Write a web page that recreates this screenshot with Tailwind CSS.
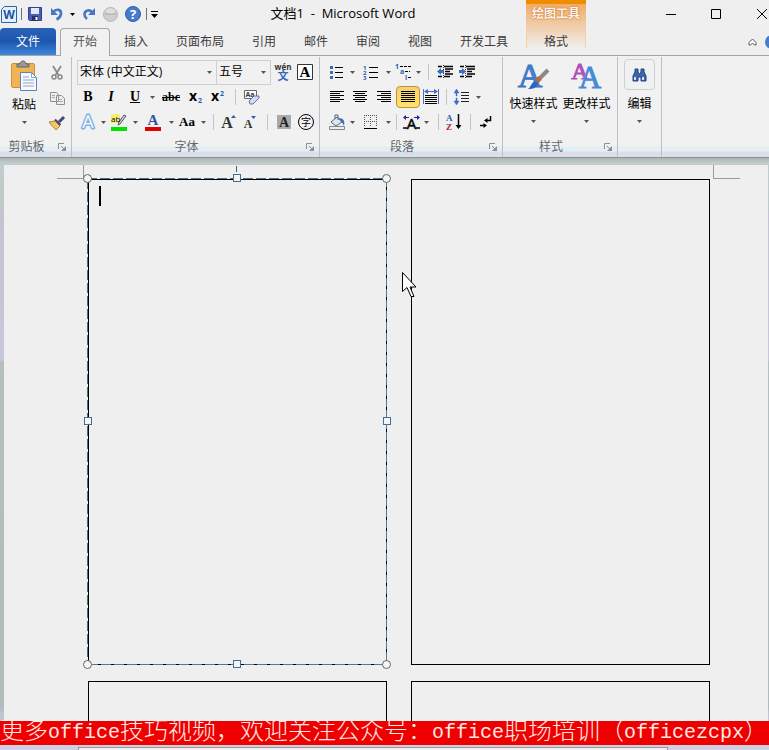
<!DOCTYPE html>
<html lang="zh-CN">
<head>
    <meta charset="UTF-8">
    <meta name="viewport" content="width=device-width, initial-scale=1.0">
    <title>文档1 - Microsoft Word</title>
    <script src="https://cdn.jsdelivr.net/npm/@tailwindcss/browser@4"></script>
    <style>
        body {
            font-family: 'Open Sans', 'Noto Sans CJK SC', sans-serif;
        }
        button {
            display: flex;
            align-items: center;
            justify-content: center;
            flex-shrink: 0;
        }
        svg {
            flex-shrink: 0;
            overflow: visible;
        }
        .serif {
            font-family: 'Liberation Serif', serif;
            font-weight: bold;
        }
    </style>
</head>
<body class="h-screen flex flex-col overflow-hidden bg-[#efefef] text-xs text-[#3a3a3a]">
    <!-- Shared glyphs -->
    <svg class="hidden">
        <symbol id="caret" viewBox="0 0 5 3"><path d="M0 0h5L2.500 3z" fill="#555"/></symbol>
        <symbol id="launcher" viewBox="0 0 8 8"><path d="M.5 6V.5H6M3 3l3 3" fill="none" stroke="#8a8f96"/><path d="M8 3v5H3z" fill="#8a8f96"/></symbol>
    </svg>

    <!-- Title bar -->
    <header class="flex h-7 shrink-0 items-center">
        <div class="flex w-40 shrink-0 items-center">
            <button aria-label="Word" class="w-[18px]">
                <svg width="16" height="17" viewBox="0 0 16 17"><path d="M3.500.5h12v16H.5v-13z" fill="#e4f0fb" stroke="#2a64a8"/><text x="8" y="13" font-size="12" font-weight="bold" text-anchor="middle" fill="#1c55a0">W</text></svg>
            </button>
            <span class="flex w-2 justify-center"><i class="h-3 w-px bg-gray-500"></i></span>
            <button aria-label="保存" class="w-5">
                <svg width="14" height="14" viewBox="0 0 14 14"><path d="M.5.5h13v13h-12l-1-1z" fill="#4a5cb4" stroke="#34418c"/><path d="M3 1h8v6H3z" fill="#dfeafa"/><path d="M4 9h6v5H4z" fill="#26306e"/><path d="M7.500 10h2v3h-2z" fill="#fff"/></svg>
            </button>
            <button aria-label="撤消" class="w-6">
                <svg width="14" height="14" viewBox="0 0 14 14"><path d="M3 5.500C6 1.500 11.500 2 11 7c-.3 2.600-2 4.300-4.500 5.500" fill="none" stroke="#4677c4" stroke-width="2.600"/><path d="M1 1v7h7z" fill="#4677c4"/></svg>
            </button>
            <button aria-label="撤消列表" class="w-2"><svg width="5" height="3" viewBox="0 0 5 3"><path d="M0 0h5L2.500 3z"/></svg></button>
            <button aria-label="恢复" class="w-6">
                <svg width="14" height="14" viewBox="0 0 14 14"><path d="M10.500 5.500C8 2 2.500 3 2.500 7.500c0 2 1 3.300 2.500 4.500" fill="none" stroke="#4677c4" stroke-width="2.600"/><path d="M13 1v7H6z" fill="#4677c4"/></svg>
            </button>
            <button aria-label="录制" class="w-5">
                <svg width="15" height="15" viewBox="0 0 15 15"><circle cx="7.500" cy="7.500" r="7" fill="#cecece" stroke="#b8b8b8"/><path d="M2 7h11" stroke="#aaa"/><ellipse cx="7.500" cy="4" rx="4.500" ry="2.500" fill="#dedede"/></svg>
            </button>
            <button aria-label="帮助" class="w-6">
                <svg width="16" height="16" viewBox="0 0 16 16"><circle cx="8" cy="8" r="7.500" fill="#4779cc" stroke="#2f5cac"/><text x="8" y="13" font-size="13" font-weight="bold" text-anchor="middle" fill="#fff">?</text></svg>
            </button>
            <span class="flex w-1 justify-center"><i class="h-3 w-px bg-gray-500"></i></span>
            <button aria-label="自定义快速访问工具栏" class="w-3"><svg width="7" height="7" viewBox="0 0 7 7"><path d="M0 0h7v1H0zM0 3h7L3.500 7z"/></svg></button>
        </div>
        <h1 class="flex-1 whitespace-pre text-center text-[13px] text-black">文档1  -  Microsoft Word</h1>
        <div class="flex w-[243px] shrink-0 justify-end">
            <button aria-label="最小化" class="h-7 w-[45px]"><svg width="10" height="10"><path d="M0 5.500h10" stroke="#000"/></svg></button>
            <button aria-label="最大化" class="h-7 w-[45px]"><svg width="10" height="10"><path d="M.5.5h9v9h-9z" fill="none" stroke="#000"/></svg></button>
            <button aria-label="关闭" class="h-7 w-[31px] pl-4"><svg width="10" height="10"><path d="M0 0l10 10M10 0L0 10" stroke="#000"/></svg></button>
        </div>
    </header>

    <!-- Ribbon tabs, the contextual tab rises into the title bar -->
    <nav class="pointer-events-none -mt-7 flex h-14 shrink-0 items-end border-b border-[#a6a6a6]">
        <button class="h-[27px] w-14 rounded-t-sm bg-linear-to-b from-[#2a62b6] via-[#1c57ae] to-[#3f86dc] text-white">文件</button>
        <button class="-mb-px ml-1 h-[28px] w-[50px] rounded-t-sm border border-b-0 border-[#a6a6a6] bg-[#f1f1f1] pb-px text-[#555]">开始</button>
        <button class="h-[27px] px-3.5">插入</button>
        <button class="h-[27px] px-3.5">页面布局</button>
        <button class="h-[27px] px-3.5">引用</button>
        <button class="h-[27px] px-3.5">邮件</button>
        <button class="h-[27px] px-3.5">审阅</button>
        <button class="h-[27px] px-3.5">视图</button>
        <button class="h-[27px] px-3.5">开发工具</button>
        <div class="ml-1 flex h-full w-[60px] shrink-0 flex-col">
            <div class="flex h-7 items-center justify-center border-t-4 border-[#f08c00] bg-linear-to-b from-[#f2ac62] to-[#f0d0b0] pb-1 font-bold text-[#fff4e8] [text-shadow:0_0_2px_#b05a20]">绘图工具</div>
            <button class="h-5 border-x border-[#f3cfa4] bg-linear-to-b from-[#f0cfae] to-[#efefef] pt-[7px]">格式</button>
        </div>
        <div class="flex h-[27px] flex-1 items-center justify-end gap-2">
            <button aria-label="功能区最小化"><svg width="9" height="8" viewBox="0 0 9 8"><path d="M4.500 1L8 4.500V7H6.500l-2-2-2 2H1V4.500z" fill="#fff" stroke="#555"/></svg></button>
            <button aria-label="Word 帮助" class="overflow-hidden"><svg width="4" height="14" viewBox="0 0 4 14"><circle cx="7" cy="7" r="7" fill="#4779cc"/></svg></button>
        </div>
    </nav>

    <!-- Ribbon -->
    <div class="flex h-[102px] shrink-0 border-b border-[#8b9293] bg-[linear-gradient(#f1f1f1_90px,#e2eff2_91px,#e4eff2_95px,#dcdfea_96px)] pt-px text-black">
        <!-- 剪贴板 -->
        <section class="flex w-[72px] shrink-0 flex-col border-r border-[#bcbfc4]">
            <div class="flex flex-1 gap-px pt-1">
                <button class="w-12 flex-col self-start">
                    <svg width="26" height="30" viewBox="0 0 26 30"><rect x=".5" y="2.500" width="23" height="24" rx="1.500" fill="#efb554" stroke="#d0913a"/><path d="M6 6V3h3c0-4 6-4 6 0h3v3z" fill="#999" stroke="#666"/><path d="M9.500 11.500h11l5 5v13h-16z" fill="#f6faff" stroke="#6480b0"/><path d="M20.500 11.500v5h5M12 16h6m-6 3h11m-11 3h11m-11 3h11" fill="none" stroke="#8ca6d0"/></svg>
                    <span class="mt-1.5">粘贴</span>
                    <svg class="mt-2" width="5" height="3"><use href="#caret"/></svg>
                </button>
                <div class="flex flex-col gap-px">
                    <button aria-label="剪切" class="h-6 w-4"><svg width="12" height="14" viewBox="0 0 12 14"><path d="M2 0l5.500 9M10 0L4.500 9" stroke="#888" stroke-width="1.700"/><circle cx="3" cy="11" r="2" fill="none" stroke="#888" stroke-width="1.500"/><circle cx="9" cy="11" r="2" fill="none" stroke="#888" stroke-width="1.500"/></svg></button>
                    <button aria-label="复制" class="h-6 w-4"><svg width="15" height="13" viewBox="0 0 15 13"><path d="M.5.5h6l2 2v7h-8zM6.500 3.500h5l3 3v6h-8z" fill="#eee" stroke="#8f8f8f"/><path d="M2 3.500h3M2 5.500h3M8 7.500h4M8 9.500h5" stroke="#aaa"/></svg></button>
                    <button aria-label="格式刷" class="h-6 w-4"><svg width="16" height="14" viewBox="0 0 16 14"><path d="M15 1l-5 5" stroke="#444a78" stroke-width="3"/><path d="M0 6l6-1 5 5-4 4c-2-2-5-5-7-8z" fill="#f0c764" stroke="#b08430"/><path d="M6 3.500l5.500 5.500" stroke="#49486a" stroke-width="2"/></svg></button>
                </div>
            </div>
            <footer class="flex h-5 shrink-0 items-center text-[#5f6670]"><span class="flex-1 text-center">剪贴板</span><button aria-label="剪贴板选项" class="w-[18px]"><svg width="8" height="8"><use href="#launcher"/></svg></button></footer>
        </section>

        <!-- 字体 -->
        <section class="flex w-[248px] shrink-0 flex-col border-r border-[#bcbfc4]">
            <div class="flex flex-1 flex-col gap-px pl-[5px] pt-[3px]">
                <div class="flex h-6 items-center">
                    <label class="relative flex h-[25px] w-[140px] items-center border border-[#cfcfcf]"><input aria-label="字体" value="宋体 (中文正文)" class="w-full px-0.5 outline-none"><svg class="absolute right-1" width="5" height="3"><use href="#caret"/></svg></label>
                    <label class="relative flex h-[25px] w-[54px] items-center border border-l-0 border-[#cfcfcf]"><input aria-label="字号" value="五号" class="w-full px-0.5 outline-none"><svg class="absolute right-1" width="5" height="3"><use href="#caret"/></svg></label>
                    <button aria-label="拼音指南" class="w-6 flex-col"><span class="text-[8px] leading-[8px] font-bold text-[#333]">wén</span><span class="text-[11px] leading-[10px] font-bold text-[#3a66c0]">文</span></button>
                    <button aria-label="字符边框" class="w-5"><svg width="16" height="16" viewBox="0 0 16 16"><path d="M.5.5h15v15H.5z" fill="#fff" stroke="#334"/><text x="8" y="13" font-size="15" text-anchor="middle" class="serif">A</text></svg></button>
                </div>
                <div class="flex h-6 items-center">
                    <button aria-label="加粗" class="serif w-[22px] text-sm">B</button>
                    <button aria-label="倾斜" class="serif w-6 text-sm italic">I</button>
                    <button aria-label="下划线" class="serif w-6 text-sm underline">U</button>
                    <button aria-label="下划线样式" class="w-2.5"><svg width="5" height="3"><use href="#caret"/></svg></button>
                    <button aria-label="删除线" class="serif w-7 text-xs line-through">abc</button>
                    <button aria-label="下标" class="w-[22px]"><svg width="14" height="14" viewBox="0 0 14 14"><text x="0" y="11" font-size="14" font-weight="bold">x</text><text x="9" y="13" font-size="7" font-weight="bold" fill="#2b5cb8">2</text></svg></button>
                    <button aria-label="上标" class="w-[22px]"><svg width="14" height="14" viewBox="0 0 14 14"><text x="0" y="11" font-size="14" font-weight="bold">x</text><text x="9" y="6" font-size="7" font-weight="bold" fill="#2b5cb8">2</text></svg></button>
                    <span class="flex w-3 justify-center"><i class="h-4 w-px bg-[#c4c4c4]"></i></span>
                    <button aria-label="清除格式" class="w-[22px]"><svg width="16" height="16" viewBox="0 0 16 16"><path d="M.5 1.500h12v8H.5z" fill="#fff" stroke="#667"/><text x="1.500" y="8" font-size="7" font-weight="bold" fill="#333">Aa</text><path d="M5 12l5-5 5 0 0 2-6 6H6z" fill="#d4dcf4" stroke="#6074b0"/></svg></button>
                </div>
                <div class="flex h-6 items-center">
                    <button aria-label="文本效果" class="w-[22px]"><svg width="16" height="16" viewBox="0 0 16 16"><text x="8" y="14" font-size="18" text-anchor="middle" fill="#f4faff" stroke="#7fb2e2" stroke-width="3" stroke-linejoin="round" paint-order="stroke">A</text></svg></button>
                    <button aria-label="文本效果列表" class="w-2"><svg width="5" height="3"><use href="#caret"/></svg></button>
                    <button aria-label="突出显示" class="w-6"><svg width="16" height="17" viewBox="0 0 16 17"><path d="M0 0h9v9H0z" fill="#f6ee70"/><path d="M15 2l-6 8-2 1 1-3 5-7z" fill="#c9d4ee" stroke="#556"/><text x="0" y="8" font-size="8" fill="#000">ab</text><path d="M0 13h16v4H0z" fill="#00e400"/></svg></button>
                    <button aria-label="突出显示颜色" class="w-2"><svg width="5" height="3"><use href="#caret"/></svg></button>
                    <button aria-label="字体颜色" class="w-7"><svg width="16" height="17" viewBox="0 0 16 17"><text x="8" y="11" font-size="15" text-anchor="middle" fill="#2f559c" class="serif">A</text><path d="M0 13h16v4H0z" fill="#e00000"/></svg></button>
                    <button aria-label="字体颜色列表" class="w-2"><svg width="5" height="3"><use href="#caret"/></svg></button>
                    <button aria-label="更改大小写" class="serif w-6 text-[13px]">Aa</button>
                    <button aria-label="大小写列表" class="w-2"><svg width="5" height="3"><use href="#caret"/></svg></button>
                    <span class="flex w-3 justify-center"><i class="h-4 w-px bg-[#c4c4c4]"></i></span>
                    <button aria-label="增大字体" class="w-5"><svg width="16" height="16" viewBox="0 0 16 16"><text x="6" y="14" font-size="16" text-anchor="middle" fill="#333" class="serif">A</text><path d="M10 4l2.500-3L15 4z" fill="#2b5cb8"/></svg></button>
                    <button aria-label="缩小字体" class="w-[22px]"><svg width="14" height="16" viewBox="0 0 14 16"><text x="5" y="14" font-size="12" text-anchor="middle" fill="#333" class="serif">A</text><path d="M8 2h5l-2.500 3z" fill="#2b5cb8"/></svg></button>
                    <span class="flex w-3 justify-center"><i class="h-4 w-px bg-[#c4c4c4]"></i></span>
                    <button aria-label="字符底纹" class="w-[22px]"><svg width="14" height="14" viewBox="0 0 14 14"><path d="M0 0h14v14H0z" fill="#a9a9a9"/><text x="7" y="12" font-size="14" text-anchor="middle" fill="#222" class="serif">A</text></svg></button>
                    <button aria-label="带圈字符" class="w-[22px]"><svg width="16" height="16" viewBox="0 0 16 16"><circle cx="8" cy="8" r="7.500" fill="none" stroke="#000"/><text x="8" y="12" font-size="10" text-anchor="middle">字</text></svg></button>
                </div>
            </div>
            <footer class="flex h-5 shrink-0 items-center text-[#5f6670]"><span class="flex-1 text-center">字体</span><button aria-label="字体选项" class="w-[18px]"><svg width="8" height="8"><use href="#launcher"/></svg></button></footer>
        </section>

        <!-- 段落 -->
        <section class="flex w-[183px] shrink-0 flex-col border-r border-[#bcbfc4]">
            <div class="flex flex-1 flex-col gap-px pl-1.5 pt-[3px]">
                <div class="flex h-6 items-center">
                    <button aria-label="项目符号" class="w-[22px]"><svg width="14" height="14" viewBox="0 0 14 14"><path d="M5 2.500h8M5 7.500h8M5 12.500h8" stroke="#000"/><path d="M0 1h3v3H0zM0 6h3v3H0zM0 11h3v3H0z" fill="#4068bc"/></svg></button>
                    <button aria-label="项目符号库" class="w-2"><svg width="5" height="3"><use href="#caret"/></svg></button>
                    <button aria-label="编号" class="w-7"><svg width="15" height="15" viewBox="0 0 15 15"><path d="M6 2.500h9M6 7.500h9M6 12.500h9" stroke="#000"/><g font-size="6" font-weight="bold" fill="#3058b4"><text x="0" y="5">1</text><text x="0" y="10">2</text><text x="0" y="15">3</text></g></svg></button>
                    <button aria-label="编号库" class="w-2"><svg width="5" height="3"><use href="#caret"/></svg></button>
                    <button aria-label="多级列表" class="w-[22px]"><svg width="17" height="16" viewBox="0 0 17 16"><path d="M5 2.500h12M10 7.500h5M13 13.500h4" stroke="#000" stroke-dasharray="3 1"/><g font-size="7" font-weight="bold" fill="#3058b4"><text x="0" y="5">1</text><text x="5" y="10">a</text><text x="10" y="16">i</text></g></svg></button>
                    <button aria-label="多级列表库" class="w-2"><svg width="5" height="3"><use href="#caret"/></svg></button>
                    <span class="flex w-3 justify-center"><i class="h-4 w-px bg-[#c4c4c4]"></i></span>
                    <button aria-label="减少缩进量" class="w-[22px]"><svg width="16" height="14" viewBox="0 0 16 14"><path d="M1 1.500h4M7 1.500h9M8 4h8M8 6.500h5M8 9h8M1 11.500h4M7 11.500h6" stroke="#000" stroke-width="1.500"/><path d="M6.500 0v14" stroke="#333" stroke-dasharray="1 1"/><path d="M0 6.500L4 3v2h3v3H4v2z" fill="#3a6cc8"/></svg></button>
                    <button aria-label="增加缩进量" class="w-[22px]"><svg width="16" height="14" viewBox="0 0 16 14"><path d="M1 1.500h4M7 1.500h9M8 4h8M8 6.500h5M8 9h8M1 11.500h4M7 11.500h6" stroke="#000" stroke-width="1.500"/><path d="M6.500 0v14" stroke="#333" stroke-dasharray="1 1"/><path d="M7 6.500L3 3v2H0v3h3v2z" fill="#3a6cc8"/></svg></button>
                </div>
                <div class="flex h-6 items-center">
                    <button aria-label="左对齐" class="w-[22px]"><svg width="14" height="12"><path d="M0 .5h14M0 2.500h10M0 4.500h14M0 6.500h10M0 8.500h14M0 10.500h10" stroke="#000"/></svg></button>
                    <button aria-label="居中" class="w-6"><svg width="14" height="12"><path d="M0 .5h14M2 2.500h10M0 4.500h14M2 6.500h10M0 8.500h14M2 10.500h10" stroke="#000"/></svg></button>
                    <button aria-label="右对齐" class="w-6"><svg width="14" height="12"><path d="M0 .5h14M4 2.500h10M0 4.500h14M4 6.500h10M0 8.500h14M4 10.500h10" stroke="#000"/></svg></button>
                    <button aria-label="两端对齐" class="h-[22px] w-6 rounded-sm border border-[#c09038] bg-linear-to-b from-[#f8d070] to-[#fde46c]"><svg width="14" height="12"><path d="M0 .5h14M0 2.500h14M0 4.500h14M0 6.500h14M0 8.500h14M0 10.500h14" stroke="#000"/></svg></button>
                    <button aria-label="分散对齐" class="w-[22px]"><svg width="16" height="16" viewBox="0 0 16 16"><path d="M.5 0v15M15.500 0v15" stroke="#4a70b8"/><path d="M2 6.500h12M2 8.500h12M2 10.500h12M2 12.500h12M2 14.500h12" stroke="#000"/><path d="M4 2.500h8" stroke="#3a6cc8"/><path d="M1 2.500L5 0v5zM15 2.500L11 0v5z" fill="#3a6cc8"/></svg></button>
                    <span class="flex w-2 justify-center"><i class="h-4 w-px bg-[#c4c4c4]"></i></span>
                    <button aria-label="行距" class="w-6"><svg width="16" height="16" viewBox="0 0 16 16"><path d="M7 3.500h8M7 6.500h8M7 9.500h8M7 12.500h8" stroke="#222"/><path d="M2.500 0L5 4H3v3H2V4H0zM2.500 16L5 12H3V9H2v3H0z" fill="#3a6cc8" stroke="#3a6cc8" stroke-width=".5"/></svg></button>
                    <button aria-label="行距选项" class="w-2"><svg width="5" height="3"><use href="#caret"/></svg></button>
                </div>
                <div class="flex h-6 items-center">
                    <button aria-label="底纹" class="w-[22px]"><svg width="16" height="16" viewBox="0 0 16 16"><path d="M2 8l6-5 5 5-6 4z" fill="#dce6f6" stroke="#567"/><path d="M6 5V1h3v5" fill="none" stroke="#567"/><path d="M10 4c5 0 6 4 5 8-1-2-1-3-3-4z" fill="#3a6cc8"/><path d="M.5 12.500h15v3H.5z" fill="#eee" stroke="#888"/></svg></button>
                    <button aria-label="底纹颜色" class="w-2"><svg width="5" height="3"><use href="#caret"/></svg></button>
                    <button aria-label="边框" class="w-7"><svg width="13" height="14" viewBox="0 0 13 14"><path d="M0 .5h13M0 6.500h13M.5 0v12M6.500 0v12M12.500 0v12" stroke="#555" stroke-dasharray="1 1"/><path d="M0 13.500h13" stroke="#000" stroke-width="1"/></svg></button>
                    <button aria-label="边框类型" class="w-2"><svg width="5" height="3"><use href="#caret"/></svg></button>
                    <span class="flex w-2 justify-center"><i class="h-4 w-px bg-[#c4c4c4]"></i></span>
                    <button aria-label="中文版式" class="w-[22px]"><svg width="17" height="14" viewBox="0 0 17 14"><text x="8.500" y="14" font-size="15" text-anchor="middle" stroke="#000" stroke-width=".5">A</text><path d="M0 13h4M13 13h4" stroke="#000" stroke-width="1.700"/><path d="M0 2.500L3 0v2h3v1H3v2zM17 2.500L14 0v2h-3v1h3v2z" fill="#1a28a0"/></svg></button>
                    <button aria-label="中文版式列表" class="w-2"><svg width="5" height="3"><use href="#caret"/></svg></button>
                    <span class="flex w-4 justify-center"><i class="h-4 w-px bg-[#c4c4c4]"></i></span>
                    <button aria-label="排序" class="w-4"><svg width="16" height="16" viewBox="0 0 16 16"><text x="0" y="7" font-size="9" fill="#2b5cb8" class="serif">A</text><text x="0" y="16" font-size="9" fill="#b02030" class="serif">Z</text><path d="M12.500 0v13" stroke="#000" stroke-width="1.500"/><path d="M9.500 11h6L12.500 15z"/></svg></button>
                    <span class="flex w-4 justify-center"><i class="h-4 w-px bg-[#c4c4c4]"></i></span>
                    <button aria-label="显示编辑标记" class="w-4"><svg width="12" height="13" viewBox="0 0 12 13"><path d="M10.500 0v4.500H6M0 9.500h5" fill="none" stroke="#000" stroke-width="1.500"/><path d="M4 4.500L7.500 2v5zM7 9.500L3.500 7v5z"/></svg></button>
                </div>
            </div>
            <footer class="flex h-5 shrink-0 items-center text-[#5f6670]"><span class="flex-1 text-center">段落</span><button aria-label="段落选项" class="w-[18px]"><svg width="8" height="8"><use href="#launcher"/></svg></button></footer>
        </section>

        <!-- 样式 -->
        <section class="flex w-[115px] shrink-0 flex-col border-r border-[#bcbfc4]">
            <div class="flex flex-1 justify-center gap-[5px] pt-1">
                <button class="w-12 flex-col self-start whitespace-nowrap">
                    <svg width="30" height="29" viewBox="0 0 30 29"><text x="11" y="26" font-size="34" text-anchor="middle" fill="#4584d4" stroke="#3a74c4" font-family="Liberation Serif">A</text><path d="M29 9l-9 9" stroke="#8a8a8a" stroke-width="4"/><path d="M21 17l-3 3" stroke="#d06030" stroke-width="5"/><path d="M19 22c-1 5-5 6-10 6 3-2 3-6 7-8z" fill="#2c68b8"/></svg>
                    <span class="mt-1.5">快速样式</span>
                    <svg class="mt-2" width="5" height="3"><use href="#caret"/></svg>
                </button>
                <button class="w-12 flex-col self-start whitespace-nowrap">
                    <svg width="30" height="29" viewBox="0 0 30 29"><text x="8" y="18" font-size="24" text-anchor="middle" fill="#b050b8" stroke="#b050b8" font-family="Liberation Serif">A</text><text x="18" y="27" font-size="31" text-anchor="middle" fill="#4c88d8" stroke="#4c88d8" font-family="Liberation Serif">A</text></svg>
                    <span class="mt-1.5">更改样式</span>
                    <svg class="mt-2" width="5" height="3"><use href="#caret"/></svg>
                </button>
            </div>
            <footer class="flex h-5 shrink-0 items-center text-[#5f6670]"><span class="flex-1 text-center">样式</span><button aria-label="样式选项" class="w-[18px]"><svg width="8" height="8"><use href="#launcher"/></svg></button></footer>
        </section>

        <!-- 编辑 -->
        <section class="flex w-11 shrink-0 justify-center border-r border-[#bcbfc4]">
            <button class="flex-col self-start pt-0.5">
                <span class="flex h-[31px] w-[31px] items-center justify-center rounded-sm border border-[#cdd0d4]">
                    <svg width="15" height="14" viewBox="0 0 15 14"><path d="M3 1h3v3l1 2h1l1-2V1h3v3l2 4v5H9V9H6v4H1V8l2-4z" fill="#3e68b4" stroke="#24407c"/><path d="M3 9v3M11 9v3" stroke="#cfe0ff" stroke-width="2"/></svg>
                </span>
                <span class="mt-1.5">编辑</span>
                <svg class="mt-2" width="5" height="3"><use href="#caret"/></svg>
            </button>
        </section>
    </div>

    <!-- Document area -->
    <main class="flex min-h-0 flex-1 bg-[linear-gradient(#a9b4b4,#c2cccc_5px,#bccaca_52px,#c4c3d4_54px,#c8c6d8_202px,#b4c0c0_204px,#b0bcbc_550px,#c4c3d4_556px)] pl-1 pr-px pt-[7px]">
        <div class="relative flex-1 overflow-hidden bg-[#efefef]">
            <!-- Margin corner marks -->
            <div class="absolute left-[53px] top-0 h-3.5 w-[27px] border-b border-r border-[#9a9a9a]"></div>
            <div class="absolute right-7 top-0 h-3.5 w-[27px] border-b border-l border-[#9a9a9a]"></div>

            <div class="grid grid-cols-2 grid-rows-[486px_486px] gap-x-6 gap-y-4 pl-[84px] pr-[58px] pt-3.5">
                <!-- Selected text box -->
                <div class="relative border border-black">
                    <div class="absolute -left-0.5 -right-px -top-0.5 h-px bg-[repeating-linear-gradient(90deg,#4a7088_0_10px,#efefef_10px_13px)]"></div>
                    <div class="absolute -bottom-px -left-0.5 -top-px w-px bg-[repeating-linear-gradient(#4a7088_0_10px,#efefef_10px_13px)]"></div>
                    <div class="absolute -bottom-px -right-px -top-px w-px bg-[repeating-linear-gradient(#4a7c9c_0_8px,#000_8px_11px)]"></div>
                    <div class="absolute -bottom-px -left-px -right-px h-px bg-[repeating-linear-gradient(90deg,#4a7c9c_0_10px,#000_10px_13px)]"></div>
                    <div class="absolute -top-3.5 left-1/2 -ml-0.5 h-1.5 w-px bg-[#4a6070]"></div>
                    <i class="absolute -left-1.5 -top-1.5 size-[9px] rounded-full border border-[#666] bg-[#f4f4f4]"></i>
                    <i class="absolute -right-[5px] -top-1.5 size-[9px] rounded-full border border-[#666] bg-[#f4f4f4]"></i>
                    <i class="absolute -bottom-[5px] -left-1.5 size-[9px] rounded-full border border-[#666] bg-[#f4f4f4]"></i>
                    <i class="absolute -bottom-[5px] -right-[5px] size-[9px] rounded-full border border-[#666] bg-[#f4f4f4]"></i>
                    <i class="absolute -top-1.5 left-1/2 -ml-[5px] size-2 border border-[#426f98] bg-[#f4f4f4]"></i>
                    <i class="absolute -bottom-1 left-1/2 -ml-[5px] size-2 border border-[#426f98] bg-[#f4f4f4]"></i>
                    <i class="absolute -left-[5px] top-1/2 -mt-[5px] size-2 border border-[#426f98] bg-[#f4f4f4]"></i>
                    <i class="absolute -right-[5px] top-1/2 -mt-[5px] size-2 border border-[#426f98] bg-[#f4f4f4]"></i>
                    <div class="ml-2.5 mt-1.5 h-5 w-0.5 bg-black"></div>
                </div>
                <div class="relative border border-black">
                    <!-- Mouse pointer -->
                    <svg class="absolute -left-2.5 top-[92px]" width="15" height="26" viewBox="0 0 15 26"><path d="M.5.5v19l4.500-4 4 9h3l-4-9.500h6z" fill="#fff" stroke="#000"/></svg>
                </div>
                <div class="border border-black"></div>
                <div class="border border-black"></div>
            </div>
        </div>
    </main>

    <p class="flex h-6 shrink-0 items-center whitespace-nowrap bg-[#ee0000] font-['Liberation_Mono','Noto_Sans_CJK_SC',monospace] text-2xl font-light leading-6 text-[#ffe8e4]">更多<span class="text-xl leading-6">office</span>技巧视频，欢迎关注公众号：<span class="text-xl leading-6">office</span>职场培训（<span class="text-xl leading-6">officezcpx</span>）</p>
    <div class="h-[5px] shrink-0 bg-[#d0d0e2] pl-[78px] pr-[101px] pt-0.5"><div class="h-full border border-b-0 border-[#999] bg-[#efefef]"></div></div>
</body>
</html>
